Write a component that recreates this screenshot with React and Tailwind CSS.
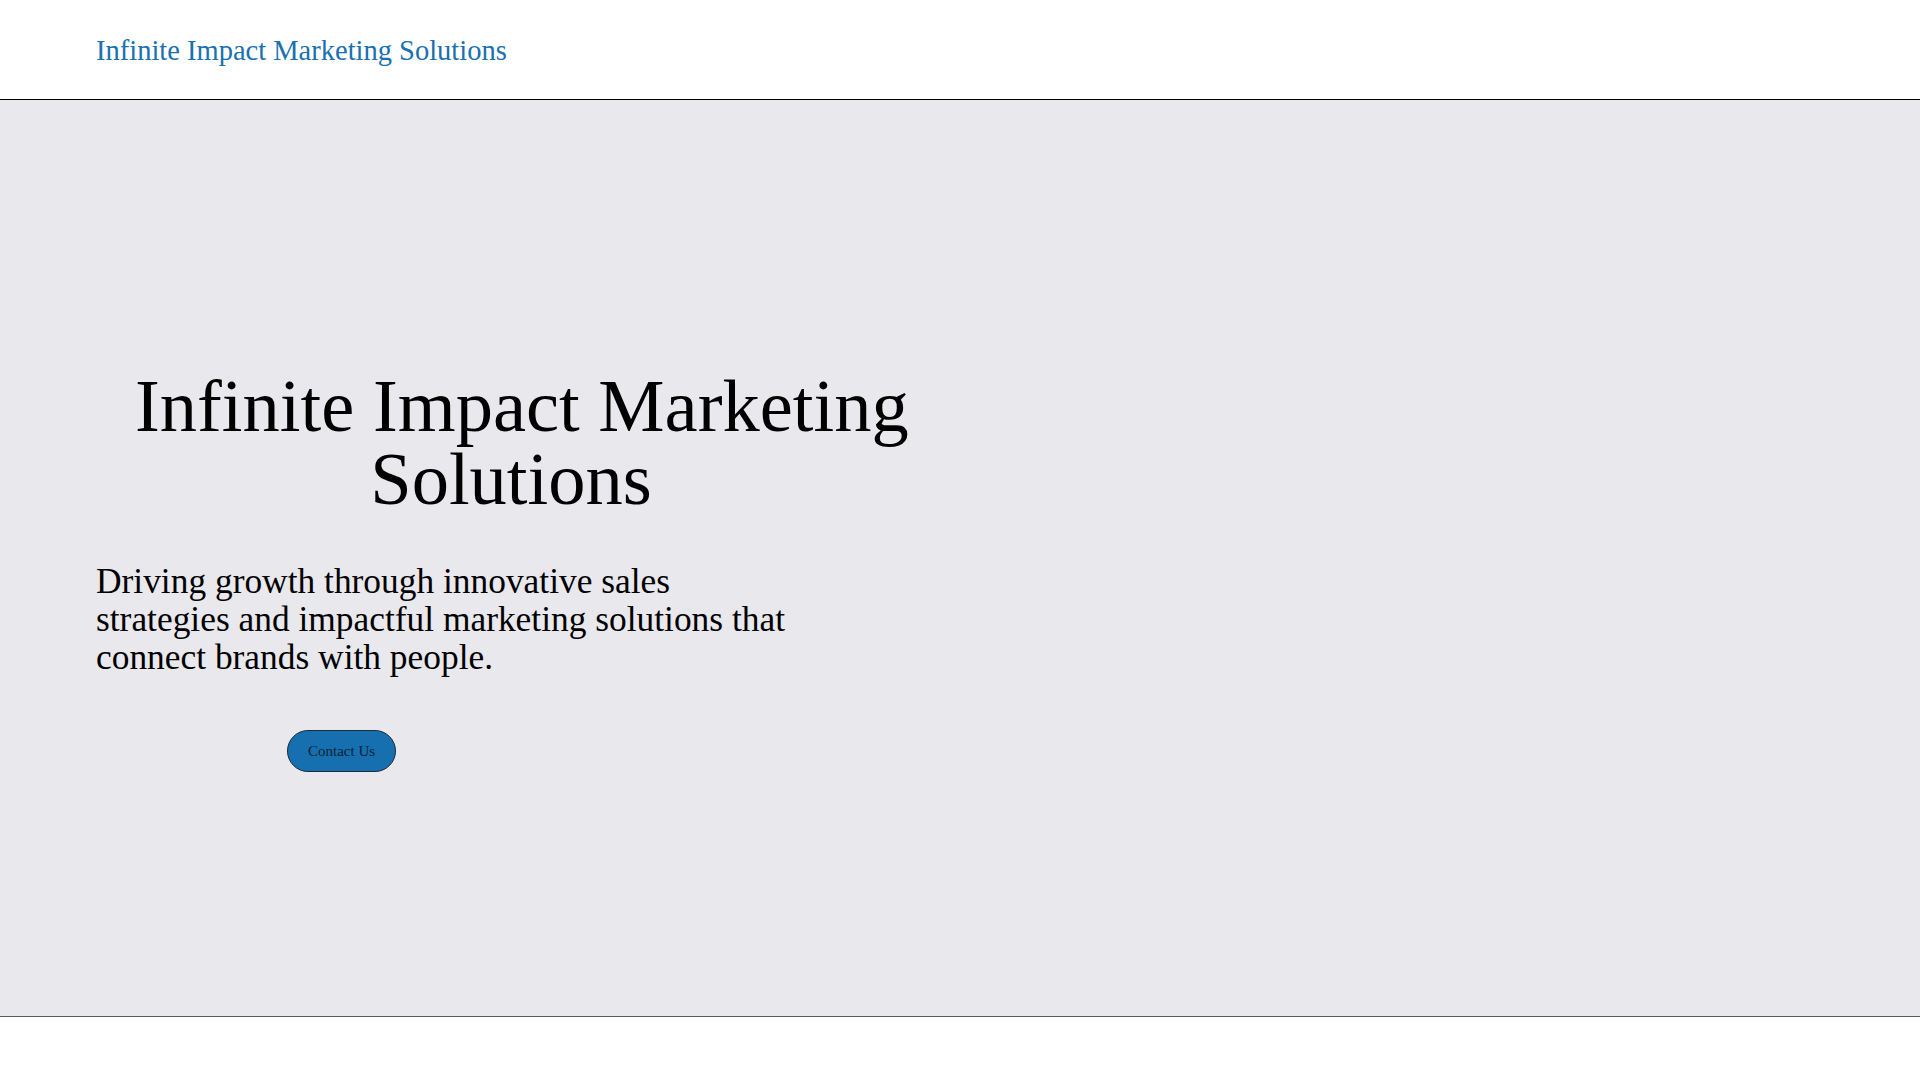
import React from 'react';

export default function App() {
  return (
    <div className="min-h-screen bg-white font-['Liberation_Serif','Times_New_Roman',serif] text-black">
      {/* Header */}
      <header className="h-[100px] border-b border-black bg-white">
        <div className="h-full px-[96px] pt-1 flex items-center">
          <a href="#" className="text-[28.5px] leading-none text-[#1b70b0]">Infinite Impact Marketing Solutions</a>
        </div>
      </header>

      {/* Hero */}
      <section className="bg-[#e9e8ed] border-b border-[#5b5b5b]">
        <div className="px-[96px] pt-[270px] pb-[244px] flex">
          <div className="w-[850px]">
            <h1 className="ml-[39px] w-[752px] text-center text-[74.5px] leading-[73px] font-normal">
              <span className="whitespace-nowrap">Infinite Impact Marketing</span> Solutions
            </h1>
            <p className="mt-[46px] max-w-[700px] text-[35.4px] leading-[38px]">
              Driving growth through innovative sales strategies and impactful marketing solutions that connect brands with people.
            </p>
            <div className="mt-[54px] pl-[191px]">
              <button className="h-[42px] px-5 rounded-full bg-[#1670b0] border border-[#1b2b3a] text-[15px] text-[#0a1f33]">
                Contact Us
              </button>
            </div>
          </div>
        </div>
      </section>

      {/* Rest of page */}
      <section className="h-[5200px] bg-white"></section>
    </div>
  );
}
